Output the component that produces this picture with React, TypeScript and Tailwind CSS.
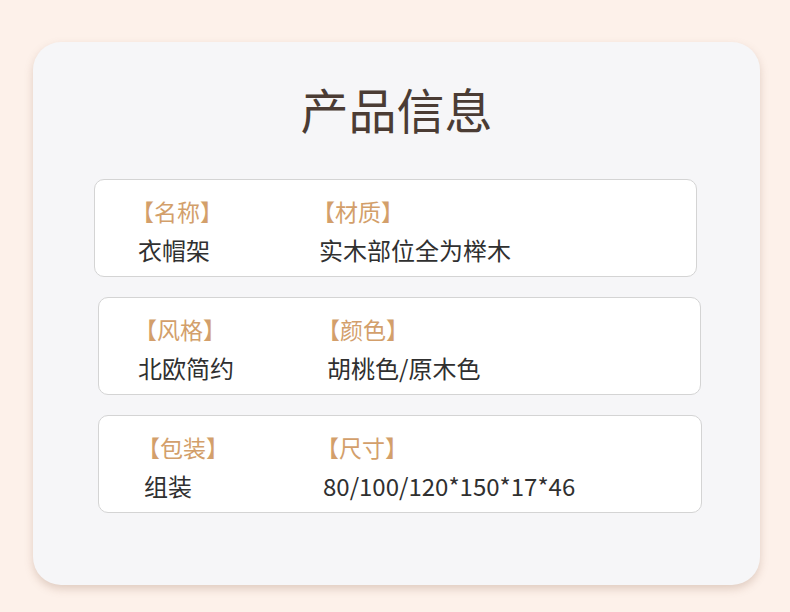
import React from "react";

const FONT = { fontFamily: '"Noto Sans CJK SC", "Noto Sans", sans-serif' };

function Label({ children }: { children: React.ReactNode }) {
  return <div className="text-[23px] leading-none text-[#d39f6b] whitespace-nowrap">{children}</div>;
}

function Value({ className, children }: { className: string; children: React.ReactNode }) {
  return (
    <div className={"mt-[15px] text-[24px] leading-none text-[#303030] whitespace-nowrap " + className}>
      {children}
    </div>
  );
}

export default function App() {
  return (
    <div className="w-[790px] h-[612px] bg-[#fdf1ea] pt-[42px] pl-[33px]" style={FONT}>
      <div className="w-[727px] h-[543px] bg-[#f6f6f8] rounded-[28px] shadow-[0_4px_8px_rgba(150,110,90,0.28)] pt-[42px] flex flex-col">
        <h1 className="text-center text-[48px] leading-none font-normal text-[#4b3c34]">产品信息</h1>
        <div className="mt-[47px] flex flex-col gap-[20px]">
          <div className="ml-[61px] w-[603px] h-[98px] bg-white border border-[#d4d4d4] rounded-[10px] pt-[20px] pl-[36px] grid grid-cols-[181px_1fr]">
            <div>
              <Label>【名称】</Label>
              <Value className="ml-[7px]">衣帽架</Value>
            </div>
            <div>
              <Label>【材质】</Label>
              <Value className="ml-[7px]">实木部位全为榉木</Value>
            </div>
          </div>
          <div className="ml-[65px] w-[603px] h-[98px] bg-white border border-[#d4d4d4] rounded-[10px] pt-[20px] pl-[35px] grid grid-cols-[183px_1fr]">
            <div>
              <Label>【风格】</Label>
              <Value className="ml-[4px]">北欧简约</Value>
            </div>
            <div>
              <Label>【颜色】</Label>
              <Value className="ml-[10px]">胡桃色/原木色</Value>
            </div>
          </div>
          <div className="ml-[65px] w-[604px] h-[98px] bg-white border border-[#d4d4d4] rounded-[10px] pt-[20px] pl-[38px] grid grid-cols-[179px_1fr]">
            <div>
              <Label>【包装】</Label>
              <Value className="ml-[7px]">组装</Value>
            </div>
            <div>
              <Label>【尺寸】</Label>
              <Value className="ml-[7px]">80/100/120*150*17*46</Value>
            </div>
          </div>
        </div>
      </div>
    </div>
  );
}
